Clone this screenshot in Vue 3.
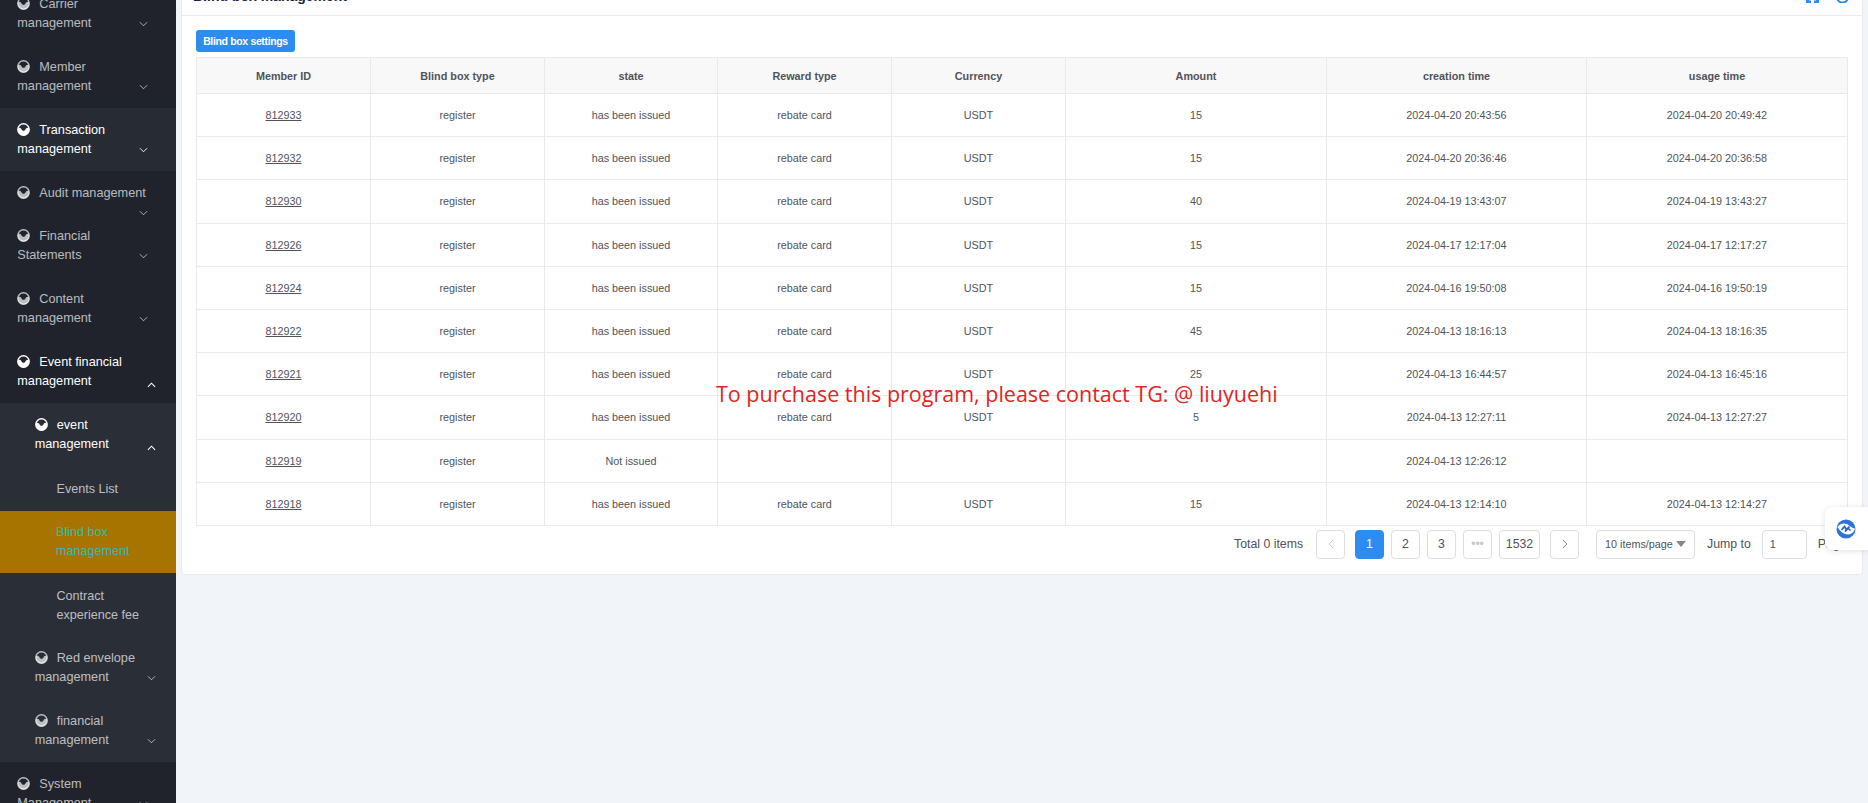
<script setup>
const menuTop = [
  { name: 'Carrier management' },
  { name: 'Member management' },
  { name: 'Transaction management', hover: true },
  { name: 'Audit management', short: true }
]
const menuMid = [
  { name: 'Financial Statements' },
  { name: 'Content management' }
]
const columns = ['Member ID', 'Blind box type', 'state', 'Reward type', 'Currency', 'Amount', 'creation time', 'usage time']
const widths = [174, 174, 173, 174, 174, 261, 260, 261]
const issued = 'has been issued'
const rows = [
  ['812933', issued, 'rebate card', 'USDT', '15', '2024-04-20 20:43:56', '2024-04-20 20:49:42'],
  ['812932', issued, 'rebate card', 'USDT', '15', '2024-04-20 20:36:46', '2024-04-20 20:36:58'],
  ['812930', issued, 'rebate card', 'USDT', '40', '2024-04-19 13:43:07', '2024-04-19 13:43:27'],
  ['812926', issued, 'rebate card', 'USDT', '15', '2024-04-17 12:17:04', '2024-04-17 12:17:27'],
  ['812924', issued, 'rebate card', 'USDT', '15', '2024-04-16 19:50:08', '2024-04-16 19:50:19'],
  ['812922', issued, 'rebate card', 'USDT', '45', '2024-04-13 18:16:13', '2024-04-13 18:16:35'],
  ['812921', issued, 'rebate card', 'USDT', '25', '2024-04-13 16:44:57', '2024-04-13 16:45:16'],
  ['812920', issued, 'rebate card', 'USDT', '5', '2024-04-13 12:27:11', '2024-04-13 12:27:27'],
  ['812919', 'Not issued', '', '', '', '2024-04-13 12:26:12', ''],
  ['812918', issued, 'rebate card', 'USDT', '15', '2024-04-13 12:14:10', '2024-04-13 12:14:27']
]
const pages = ['1', '2', '3']
const icon = 'M0.9 4.8 C2.6 3.9 3.6 4.7 4.2 6 C4.9 7.6 7.1 7.6 7.8 6 C8.4 4.7 9.4 3.9 11.1 4.8 A5.3 5.3 0 1 1 0.9 4.8Z'
</script>

<template>
  <div class="page">
    <aside class="sider">
      <div class="menu">
        <div v-for="m in menuTop" :key="m.name" class="item" :class="{ hover: m.hover, short: m.short }">
          <svg class="ico" viewBox="0 0 12 12"><circle cx="6" cy="6" r="5.3" fill="none" stroke="currentColor" stroke-width="1.2" /><path :d="icon" fill="currentColor" /></svg>
          <span>{{ m.name }}</span>
          <svg class="chev" viewBox="0 0 10 6"><path d="M1 1 L5 5 L9 1" fill="none" stroke="currentColor" stroke-width="1" /></svg>
        </div>
        <div v-for="m in menuMid" :key="m.name" class="item">
          <svg class="ico" viewBox="0 0 12 12"><circle cx="6" cy="6" r="5.3" fill="none" stroke="currentColor" stroke-width="1.2" /><path :d="icon" fill="currentColor" /></svg>
          <span>{{ m.name }}</span>
          <svg class="chev" viewBox="0 0 10 6"><path d="M1 1 L5 5 L9 1" fill="none" stroke="currentColor" stroke-width="1" /></svg>
        </div>
        <div class="item open">
          <svg class="ico" viewBox="0 0 12 12"><circle cx="6" cy="6" r="5.3" fill="none" stroke="currentColor" stroke-width="1.2" /><path :d="icon" fill="currentColor" /></svg>
          <span>Event financial management</span>
          <svg class="chev up" viewBox="0 0 10 6"><path d="M1 5 L5 1 L9 5" fill="none" stroke="currentColor" stroke-width="1.2" /></svg>
        </div>
        <div class="sub">
          <div class="item nested open">
            <svg class="ico" viewBox="0 0 12 12"><circle cx="6" cy="6" r="5.3" fill="none" stroke="currentColor" stroke-width="1.2" /><path :d="icon" fill="currentColor" /></svg>
            <span>event management</span>
            <svg class="chev up" viewBox="0 0 10 6"><path d="M1 5 L5 1 L9 5" fill="none" stroke="currentColor" stroke-width="1.2" /></svg>
          </div>
          <div class="leaf first">Events List</div>
          <div class="leaf active">Blind box management</div>
          <div class="leaf">Contract experience fee</div>
          <div class="item nested">
            <svg class="ico" viewBox="0 0 12 12"><circle cx="6" cy="6" r="5.3" fill="none" stroke="currentColor" stroke-width="1.2" /><path :d="icon" fill="currentColor" /></svg>
            <span>Red envelope management</span>
            <svg class="chev in" viewBox="0 0 10 6"><path d="M1 1 L5 5 L9 1" fill="none" stroke="currentColor" stroke-width="1" /></svg>
          </div>
          <div class="item nested">
            <svg class="ico" viewBox="0 0 12 12"><circle cx="6" cy="6" r="5.3" fill="none" stroke="currentColor" stroke-width="1.2" /><path :d="icon" fill="currentColor" /></svg>
            <span>financial management</span>
            <svg class="chev in" viewBox="0 0 10 6"><path d="M1 1 L5 5 L9 1" fill="none" stroke="currentColor" stroke-width="1" /></svg>
          </div>
        </div>
        <div class="item">
          <svg class="ico" viewBox="0 0 12 12"><circle cx="6" cy="6" r="5.3" fill="none" stroke="currentColor" stroke-width="1.2" /><path :d="icon" fill="currentColor" /></svg>
          <span>System Management</span>
          <svg class="chev" viewBox="0 0 10 6"><path d="M1 1 L5 5 L9 1" fill="none" stroke="currentColor" stroke-width="1" /></svg>
        </div>
      </div>
    </aside>

    <main class="main">
      <section class="card">
        <header class="card-head">
          <span class="card-title">Blind box management</span>
          <span class="head-icons">
            <svg width="13" height="14" viewBox="0 0 13 14"><path d="M1.5 0 V14 M11.5 0 V14 M1 13 H5 M8 13 H12" fill="none" stroke="#2d8cf0" stroke-width="3" /></svg>
            <svg width="13" height="14" viewBox="0 0 13 14"><path d="M1 7 A5.5 5.5 0 0 0 12 9" fill="none" stroke="#2d8cf0" stroke-width="2" /></svg>
          </span>
        </header>
        <div class="card-body">
          <button class="btn">Blind box settings</button>
          <table class="table">
            <colgroup>
              <col v-for="(w, i) in widths" :key="i" :style="{ width: w + 'px' }" />
            </colgroup>
            <thead>
              <tr>
                <th v-for="c in columns" :key="c">{{ c }}</th>
              </tr>
            </thead>
            <tbody>
              <tr v-for="r in rows" :key="r[0]">
                <td><a class="uid">{{ r[0] }}</a></td>
                <td>register</td>
                <td>{{ r[1] }}</td>
                <td>{{ r[2] }}</td>
                <td>{{ r[3] }}</td>
                <td>{{ r[4] }}</td>
                <td>{{ r[5] }}</td>
                <td>{{ r[6] }}</td>
              </tr>
            </tbody>
          </table>
          <div class="pager">
            <span class="total">Total 0 items</span>
            <span class="pg prev">
              <svg width="6" height="10" viewBox="0 0 6 10"><path d="M5 1 L1 5 L5 9" fill="none" stroke="#c5c8ce" stroke-width="1" /></svg>
            </span>
            <span v-for="p in pages" :key="p" class="pg" :class="{ current: p === '1' }">{{ p }}</span>
            <span class="pg dots">•••</span>
            <span class="pg wide">1532</span>
            <span class="pg next">
              <svg width="6" height="10" viewBox="0 0 6 10"><path d="M1 1 L5 5 L1 9" fill="none" stroke="#808695" stroke-width="1" /></svg>
            </span>
            <span class="size">10 items/page<i class="tri"></i></span>
            <span class="jump">Jump to</span>
            <span class="jump-input">1</span>
            <span class="page-word">Page</span>
          </div>
        </div>
      </section>
    </main>

    <div class="notice">To purchase this program, please contact TG: @ liuyuehi</div>

    <div class="float-btn">
      <svg width="20" height="20" viewBox="0 0 20 20">
        <circle cx="10" cy="10" r="9.5" fill="#2a74dc" />
        <path d="M1.5 8 C5 3.5 10 4 13 6.5 C15.5 8.5 17.5 9.5 19 9.5 C18.5 12 16 15.5 12 15.5 C8 15.5 4 12.5 1.5 8Z" fill="#fff" />
        <path d="M5.5 11 L8.5 7.5 L10.5 11 L13.5 7.5 M9 12.5 L12 9 L14.5 11.5" fill="none" stroke="#2560c4" stroke-width="1.7" />
      </svg>
    </div>
  </div>
</template>

<style>
html, body {
  margin: 0;
  height: 100%;
  overflow: hidden;
}
</style>

<style scoped>
.page {
  position: relative;
  display: flex;
  height: 803px;
  overflow: hidden;
  background: #f1f4f9;
  font-family: "Liberation Sans", Arial, sans-serif;
  color: #50535a;
}

.sider {
  width: 176px;
  flex: none;
  height: 803px;
  overflow: hidden;
  background: #20232c;
}
.menu {
  margin-top: -18px;
}
.item {
  position: relative;
  padding: 13px 27px 12px 17.3px;
  font-size: 12.7px;
  line-height: 19px;
  color: rgba(255, 255, 255, 0.7);
}
.item.short {
  padding-bottom: 11px;
}
.item.hover {
  background: #272b34;
  color: #fff;
}
.item.open {
  color: #fff;
}
.item.nested {
  padding-left: 34.7px;
  padding-right: 17px;
}
.ico {
  width: 13px;
  height: 13px;
  margin-right: 9px;
  vertical-align: -1.5px;
}
.chev {
  position: absolute;
  left: 139px;
  top: 39px;
  width: 9px;
  height: 6px;
}
.chev.up {
  left: 147px;
  top: 42px;
}
.chev.in {
  left: 147px;
}
.sub {
  background: #2a2e37;
}
.leaf {
  padding: 13.5px 24px 11.5px 56.5px;
  font-size: 12.6px;
  line-height: 19px;
  color: rgba(255, 255, 255, 0.7);
}
.leaf.first {
  padding-bottom: 12.5px;
}
.leaf.active {
  padding: 12px 24px 12px 56px;
  background: #a87400;
  color: #2dbdb0;
}

.main {
  flex: 1;
  min-width: 0;
  padding: 0 5px;
}
.card {
  margin-top: -26px;
  background: #fff;
  border: 1px solid #e8eaec;
  border-radius: 4px;
}
.card-head {
  display: flex;
  align-items: flex-end;
  justify-content: space-between;
  height: 40px;
  padding: 0 11px;
  border-bottom: 1px solid #e8eaec;
}
.card-title {
  font-size: 14px;
  font-weight: 700;
  line-height: 20px;
  color: #17233d;
  margin-bottom: 9px;
}
.head-icons {
  display: flex;
  gap: 17px;
  margin-bottom: 12px;
  margin-right: 2px;
}
.card-body {
  padding: 14px 14px 15px;
}
.btn {
  display: block;
  width: 99px;
  height: 22px;
  padding: 0;
  border: 0;
  border-radius: 3px;
  background: #2d8cf0;
  color: #fff;
  font-family: inherit;
  font-size: 10.5px;
  font-weight: 700;
  letter-spacing: -0.35px;
}
.table {
  width: 1651px;
  margin-top: 5px;
  table-layout: fixed;
  border-collapse: collapse;
  border: 1px solid #dcdee2;
  font-size: 10.8px;
  color: #50535a;
}
.table th {
  height: 35px;
  padding: 0;
  background: #f8f8f9;
  border: 1px solid #e8eaec;
  font-weight: 700;
  text-align: center;
}
.table td {
  height: 42.2px;
  padding: 0;
  border: 1px solid #e8eaec;
  text-align: center;
}
.uid {
  text-decoration: underline;
}
.pager {
  display: flex;
  align-items: center;
  justify-content: flex-end;
  gap: 7px;
  margin-top: 4px;
  height: 29px;
  font-size: 12.3px;
}
.total {
  margin-right: 6px;
}
.pg {
  display: flex;
  align-items: center;
  justify-content: center;
  box-sizing: border-box;
  width: 29px;
  height: 29px;
  border: 1px solid #dcdee2;
  border-radius: 4px;
  background: #fff;
}
.pg.prev {
  margin-right: 3px;
}
.pg.current {
  border-color: #2d8cf0;
  background: #2d8cf0;
  color: #fff;
}
.pg.dots {
  color: #c5c8ce;
  font-size: 12px;
}
.pg.wide {
  width: 41px;
}
.pg.next {
  margin-left: 3px;
}
.size {
  display: flex;
  align-items: center;
  justify-content: space-between;
  box-sizing: border-box;
  width: 99px;
  height: 29px;
  margin-left: 10px;
  padding: 0 8px;
  border: 1px solid #dcdee2;
  border-radius: 4px;
  font-size: 10.8px;
}
.tri {
  width: 0;
  height: 0;
  border-left: 5px solid transparent;
  border-right: 5px solid transparent;
  border-top: 6px solid #808695;
}
.jump {
  margin-left: 5px;
  margin-right: 4px;
}
.jump-input {
  display: flex;
  align-items: center;
  box-sizing: border-box;
  width: 45px;
  height: 29px;
  padding-left: 7px;
  border: 1px solid #dcdee2;
  border-radius: 4px;
  font-size: 11px;
}
.page-word {
  margin-left: 4px;
  margin-right: 1.5px;
}

.notice {
  position: absolute;
  left: 716px;
  top: 378px;
  font-family: "Open Sans", sans-serif;
  font-size: 21.5px;
  line-height: 32px;
  white-space: nowrap;
  color: #e3241c;
}
.float-btn {
  position: absolute;
  right: 0;
  top: 507px;
  display: flex;
  align-items: center;
  justify-content: center;
  box-sizing: border-box;
  width: 43px;
  height: 43px;
  padding-right: 1px;
  background: #fff;
  border-radius: 8px 0 0 8px;
  box-shadow: 0 1px 6px rgba(0, 0, 0, 0.12);
}
</style>
